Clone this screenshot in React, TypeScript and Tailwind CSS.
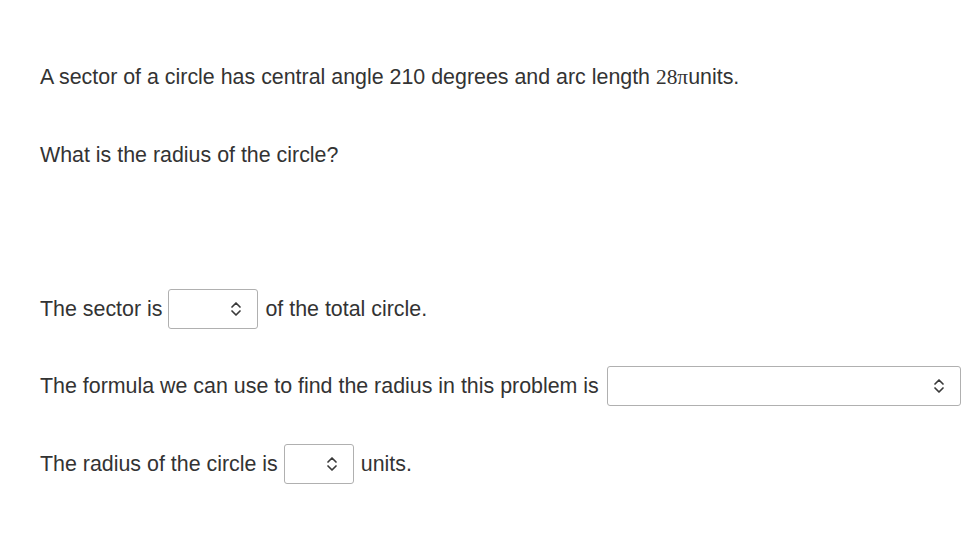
import React from "react";

function Chevrons() {
  return (
    <svg width="12" height="18" viewBox="0 0 12 18" fill="none" stroke="#3a3a3a" strokeWidth="1.7" strokeLinecap="round" strokeLinejoin="round">
      <path d="M2 7 L6 3 L10 7" />
      <path d="M2 11 L6 15 L10 11" />
    </svg>
  );
}

function SelectBox({ width, ml }: { width: string; ml: string }) {
  return (
    <div className={`${width} ${ml} h-[40px] border border-[#b0b0b0] rounded-[3px] bg-white flex items-center justify-end pr-[15px] mr-[7px] shrink-0`}>
      <Chevrons />
    </div>
  );
}

export default function App() {
  return (
    <div
      className="w-[974px] h-[540px] bg-white text-[#333] text-[21.4px] pl-[40px] flex flex-col"
      style={{ fontFamily: '"Liberation Sans", Arial, sans-serif' }}
    >
      <div className="mt-[63px] h-[28px] flex items-center">
        <span>A sector of a circle has central angle 210 degrees and arc length&nbsp;</span>
        <span style={{ fontFamily: '"Liberation Serif", "Times New Roman", serif' }}>28π</span>
        <span>units.</span>
      </div>
      <div className="mt-[50px] h-[28px] flex items-center">What is the radius of the circle?</div>
      <div className="mt-[120px] h-[40px] flex items-center">
        <span>The sector is</span>
        <SelectBox width="w-[90px]" ml="ml-[6px]" />
        <span>of the total circle.</span>
      </div>
      <div className="mt-[37px] h-[40px] flex items-center">
        <span>The formula we can use to find the radius in this problem is</span>
        <SelectBox width="w-[354px]" ml="ml-[8px]" />
      </div>
      <div className="mt-[38px] h-[40px] flex items-center">
        <span>The radius of the circle is</span>
        <SelectBox width="w-[70px]" ml="ml-[6px]" />
        <span>units.</span>
      </div>
    </div>
  );
}
